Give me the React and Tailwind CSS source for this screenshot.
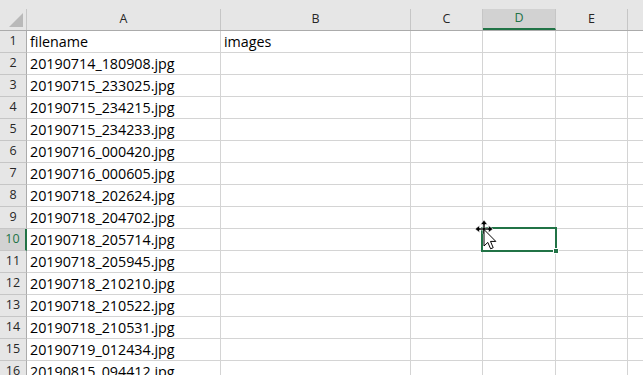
import React from "react";

const files = [
  "filename",
  "20190714_180908.jpg",
  "20190715_233025.jpg",
  "20190715_234215.jpg",
  "20190715_234233.jpg",
  "20190716_000420.jpg",
  "20190716_000605.jpg",
  "20190718_202624.jpg",
  "20190718_204702.jpg",
  "20190718_205714.jpg",
  "20190718_205945.jpg",
  "20190718_210210.jpg",
  "20190718_210522.jpg",
  "20190718_210531.jpg",
  "20190719_012434.jpg",
  "20190815_094412.jpg",
];

const cols = [
  { k: "A", w: "w-[194px]" },
  { k: "B", w: "w-[190px]" },
  { k: "C", w: "w-[72px]" },
  { k: "D", w: "w-[73px]" },
  { k: "E", w: "w-[72px]" },
];

const cellFont = { fontFamily: '"Open Sans", "Liberation Sans", sans-serif' };
const hdrFont = { fontFamily: '"Open Sans", "Noto Sans", sans-serif' };

function Cursor() {
  return (
    <svg
      className="absolute left-[474px] top-[218px]"
      width="28"
      height="36"
      viewBox="0 0 28 36"
    >
      {/* move cross */}
      <g fill="#000" stroke="#fff" strokeWidth="0.6">
        <path d="M10 2 L13.5 6.5 L11 6.5 L11 10 L14.5 10 L14.5 7.5 L19 11 L14.5 14.5 L14.5 12 L11 12 L11 16 L9 16 L9 12 L5.5 12 L5.5 14.5 L1 11 L5.5 7.5 L5.5 10 L9 10 L9 6.5 L6.5 6.5 Z" />
      </g>
      {/* arrow pointer */}
      <path
        d="M10 11.5 L10 28 L13.8 24.4 L16.6 30.8 L19.2 29.7 L16.5 23.4 L21.8 23.4 Z"
        fill="#fff"
        stroke="#000"
        strokeWidth="1"
        strokeLinejoin="miter"
      />
    </svg>
  );
}

export default function App() {
  return (
    <div className="relative w-[643px] h-[375px] overflow-hidden bg-white">
      <div className="h-[9px] bg-[#e6e6e6]" />
      <div className="flex h-[22px] bg-[#e6e6e6] border-b border-[#ababab]">
        <div className="relative w-[27px] h-full border-r border-[#c6c6c6] shrink-0">
          <svg className="absolute right-[3px] bottom-[3px]" width="14" height="14" viewBox="0 0 14 14">
            <path d="M14 0 L14 14 L0 14 Z" fill="#b9b9b9" />
          </svg>
        </div>
        {cols.map((c) => (
          <div
            key={c.k}
            style={hdrFont}
            className={`${c.w} shrink-0 h-full border-r border-[#c6c6c6] flex items-center justify-center text-[12.5px] ${
              c.k === "D"
                ? "bg-[#d2d2d2] text-[#217346] border-b-2 border-b-[#217346] -mb-px h-[22px]"
                : "text-[#262626]"
            }`}
          >
            {c.k}
          </div>
        ))}
        <div className="flex-1" />
      </div>
      {files.map((f, i) => {
        const n = i + 1;
        const sel = n === 10;
        return (
          <div key={n} className="flex h-[22px]">
            <div
              style={hdrFont}
              className={`w-[27px] shrink-0 h-full border-b border-[#c6c6c6] flex items-center justify-center text-[12.5px] ${
                sel
                  ? "bg-[#d2d2d2] text-[#217346] border-r-2 border-r-[#217346]"
                  : "bg-[#e6e6e6] text-[#262626] border-r border-r-[#ababab]"
              }`}
            >
              {n}
            </div>
            {cols.map((c) => (
              <div
                key={c.k}
                style={cellFont}
                className={`${c.w} shrink-0 h-full border-r border-b border-[#d4d4d4] flex items-end pl-[3px] pb-[1px] text-[14.3px] leading-[19px] text-black whitespace-nowrap`}
              >
                {c.k === "A" ? f : n === 1 && c.k === "B" ? "images" : ""}
              </div>
            ))}
            <div className="flex-1 h-full border-b border-[#d4d4d4]" />
          </div>
        );
      })}
      <div className="absolute left-[481px] top-[227px] w-[76px] h-[25px] border-2 border-[#217346]" />
      <div className="absolute left-[553px] top-[248px] w-[6px] h-[6px] bg-[#217346] border border-white" />
      <Cursor />
    </div>
  );
}
